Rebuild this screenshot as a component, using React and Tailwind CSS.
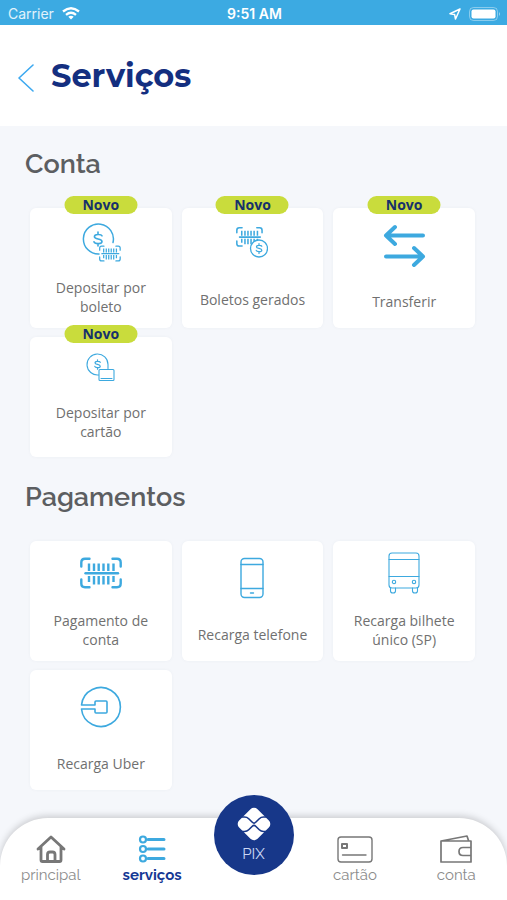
import React from "react";

function Svg({ className, viewBox, children, sw = 1.5 }) {
  return (
    <svg
      className={className}
      viewBox={viewBox}
      fill="none"
      stroke="currentColor"
      strokeWidth={sw}
      strokeLinecap="round"
      strokeLinejoin="round"
      aria-hidden="true"
    >
      {children}
    </svg>
  );
}

const dollar = "M4 -3.2C3.2 -5 -3.6 -5.2 -3.6 -2.3C-3.6 .6 4 -.7 4 2.4C4 5.4 -3.4 5.2 -4 2.8M0 -7V-4.6M0 4.8V7";

function Barcode() {
  return (
    <>
      <path d="M1.300 9V5Q1.300 1.300 5 1.300H9.500M32.500 1.300H37Q40.700 1.300 40.700 5V9M40.700 22V26Q40.700 29.700 37 29.700H32.500M9.500 29.700H5Q1.300 29.700 1.300 26V22" />
      <path d="M5.500 15.800H38" />
      <path
        d="M9 6V13.500M14 6V13.500M18.700 6V13.500M23.500 6V13.500M28.300 6V13.500M33.500 6V13.500M9 18.500V24.500M14 18.500V27M18.700 18.500V27M23.500 18.500V27M28.300 18.500V27M33.500 18.500V24.500"
        strokeLinecap="butt"
      />
    </>
  );
}

function SlipDepositIcon() {
  return (
    <Svg className="mt-[15px] h-10 w-10" viewBox="0 0 40 40">
      <path d="M32 19.500A15 15 0 1 0 18 31" />
      <path d={dollar} transform="translate(17 16)" strokeWidth="1.600" />
      <g transform="translate(18 22.500) scale(.52)" strokeWidth="2.400">
        <Barcode />
      </g>
    </Svg>
  );
}

function SlipsIcon() {
  return (
    <Svg className="mt-[19px] h-8 w-8" viewBox="0 0 32 32">
      <g transform="scale(.64)" strokeWidth="2.400">
        <Barcode />
      </g>
      <circle cx="23" cy="21.500" r="8.500" fill="white" strokeWidth="1.300" />
      <path d={dollar} transform="translate(23 21.500) scale(.7)" strokeWidth="1.800" />
    </Svg>
  );
}

function TransferIcon() {
  return (
    <Svg className="mt-4 h-[43px] w-[43px]" viewBox="0 0 43 43" sw={4}>
      <path d="M40 11.500H3M12 3L3 11.500L12 20M3 32.500H40M31 24L40 32.500L31 41" />
    </Svg>
  );
}

function CardDepositIcon() {
  return (
    <Svg className="mt-4 h-[29px] w-[29px]" viewBox="0 0 29 29" sw={1.1}>
      <path d="M22 15.500V11.500A10.500 10.500 0 1 0 12.500 22" />
      <path d={dollar} transform="translate(11.500 11.500) scale(.68)" strokeWidth="1.800" />
      <rect x="13" y="16.500" width="15" height="11" rx="1" fill="white" />
      <path d="M15 25.500H26" strokeWidth="1" />
    </Svg>
  );
}

function BillIcon() {
  return (
    <Svg className="mt-4 h-8 w-[42px]" viewBox="0 0 42 31" sw={2.4}>
      <Barcode />
    </Svg>
  );
}

function PhoneIcon() {
  return (
    <Svg className="mt-4 h-[42px] w-6" viewBox="0 0 24 42" sw={1.4}>
      <rect x="1" y="1.500" width="22" height="39" rx="3.500" />
      <path d="M1 7.500H23M1 31.500H23M10.500 36H13.500" />
    </Svg>
  );
}

function BusIcon() {
  return (
    <Svg className="mt-[11px] h-[42px] w-8" viewBox="0 0 32 42" sw={1.1}>
      <rect x="1" y="1" width="30" height="35" rx="3" />
      <path d="M1 7.500H31M1 24.500H31M2.500 36V39Q2.500 41 5 41Q7.500 41 7.500 39V36M24.500 36V39Q24.500 41 27 41Q29.500 41 29.500 39V36" />
      <circle cx="6" cy="30" r="1.700" />
      <circle cx="26" cy="30" r="1.700" />
    </Svg>
  );
}

function UberIcon() {
  return (
    <Svg className="mt-4 h-[42px] w-[42px]" viewBox="0 0 42 42" sw={1.6}>
      <path d="M1.500 19A19.500 19.500 0 1 1 1.500 23H15V26Q15 27 16 27H26Q27 27 27 26V16Q27 15 26 15H16Q15 15 15 16V19Z" />
    </Svg>
  );
}

function ServiceCard({ icon, iconArea, label, badge }) {
  return (
    <button
      type="button"
      className="relative flex h-[120px] flex-col items-center rounded-md bg-white shadow-[0_0_3px_rgba(90,100,120,0.06)]"
    >
      {badge && (
        <span className="absolute -top-3 left-1/2 h-[18px] w-[73px] -translate-x-1/2 rounded-full bg-[#c9dc3c] text-center text-[14px] leading-[18px] font-bold text-[#16316b]">
          Novo
        </span>
      )}
      <span className={`flex shrink-0 flex-col items-center text-[#3da9df] ${iconArea}`}>{icon}</span>
      <span className="px-3 text-[14px] leading-[19px] whitespace-pre-line text-[#707070]">{label}</span>
    </button>
  );
}

function Section({ title, items }) {
  return (
    <section>
      <h2 className="pl-[25px] font-['Raleway','Lato',sans-serif] text-[27px] leading-8 font-semibold text-[#5c5e61]">
        {title}
      </h2>
      <div className="mt-7 mr-8 ml-[30px] grid grid-cols-3 gap-x-[10px] gap-y-[9px]">
        {items.map((item) => (
          <ServiceCard key={item.label} {...item} />
        ))}
      </div>
    </section>
  );
}

const account = [
  { icon: <SlipDepositIcon />, iconArea: "h-[70px]", label: "Depositar por\nboleto", badge: true },
  { icon: <SlipsIcon />, iconArea: "h-[82px]", label: "Boletos gerados", badge: true },
  { icon: <TransferIcon />, iconArea: "h-[84px]", label: "Transferir", badge: true },
  { icon: <CardDepositIcon />, iconArea: "h-[66px]", label: "Depositar por\ncartão", badge: true },
];

const payments = [
  { icon: <BillIcon />, iconArea: "h-[70px]", label: "Pagamento de\nconta" },
  { icon: <PhoneIcon />, iconArea: "h-[84px]", label: "Recarga telefone" },
  { icon: <BusIcon />, iconArea: "h-[70px]", label: "Recarga bilhete\núnico (SP)" },
  { icon: <UberIcon />, iconArea: "h-[84px]", label: "Recarga Uber" },
];

function StatusBar() {
  return (
    <div className="grid h-[25px] grid-cols-3 items-center bg-[#3caae2] pr-[6px] pl-2 font-['Inter',sans-serif] text-[14px] leading-5 text-white">
      <div className="flex items-center gap-2 pt-[2px] text-white/85">
        Carrier
        <svg className="h-[13px] w-[18px]" viewBox="0 0 18 13" fill="none" stroke="white" strokeWidth="2.300" aria-hidden="true">
          <path d="M1 4.500Q9 -2 17 4.500M4 7.800Q9 3.700 14 7.800" />
          <path d="M9 12.500L6.300 9.800Q9 7.800 11.700 9.800Z" fill="white" stroke="none" />
        </svg>
      </div>
      <div className="pt-[2px] text-center font-semibold">9:51 AM</div>
      <div className="flex items-center justify-end gap-2 pt-[2px]">
        <svg className="h-3 w-3" viewBox="0 0 12 12" fill="none" stroke="white" strokeWidth="1.500" strokeLinejoin="round" aria-hidden="true">
          <path d="M11 1L1 5.800L5.600 6.400L6.500 11Z" />
        </svg>
        <svg className="h-[14px] w-8" viewBox="0 0 32 14" aria-hidden="true">
          <rect x=".5" y=".5" width="28" height="13" rx="4" fill="none" stroke="white" strokeOpacity=".4" />
          <rect x="2.500" y="2.500" width="24" height="9" rx="2" fill="white" />
          <path d="M30 5Q32 7 30 9Z" fill="white" fillOpacity=".5" />
        </svg>
      </div>
    </div>
  );
}

function NavItem({ label, children, active }) {
  return (
    <button
      type="button"
      aria-current={active ? "page" : undefined}
      className="flex flex-1 flex-col items-center pt-[15px] text-[#777]"
    >
      <span className="flex h-8 items-center">{children}</span>
      <span
        className={`text-[15px] leading-5 ${active ? "font-bold text-[#163894]" : "text-[#8c8c8c]"}`}
      >
        {label}
      </span>
    </button>
  );
}

function BottomNav() {
  return (
    <nav className="mt-auto flex h-[82px] rounded-t-[48px] bg-white font-['Raleway','Lato',sans-serif] shadow-[0_-2px_7px_rgba(0,0,0,0.18)]">
      <NavItem label="principal">
        <Svg className="h-7 w-[30px]" viewBox="0 0 30 28" sw={2.8}>
          <path d="M2 14L15 2L28 14M5 12V25Q5 26.500 6.500 26.500H23.500Q25 26.500 25 25V12M11.500 26V19.500Q11.500 17 14 17H16.500Q19 17 19 19.500V26" />
        </Svg>
      </NavItem>
      <NavItem label="serviços" active>
        <Svg className="h-7 w-7 text-[#3da9df]" viewBox="0 0 28 28" sw={2.2}>
          <circle cx="5" cy="4.500" r="3" />
          <circle cx="5" cy="14" r="3" />
          <circle cx="5" cy="23.500" r="3" />
          <path d="M10 4.500H26M10 14H26M10 23.500H26" strokeWidth="3" />
        </Svg>
      </NavItem>
      <div className="flex flex-1 justify-center">
        <button
          type="button"
          className="-mt-[23px] flex h-20 w-20 shrink-0 flex-col items-center rounded-full bg-[#173789] pt-3 text-white"
        >
          <svg className="h-[34px] w-[34px]" viewBox="0 0 34 34" aria-hidden="true">
            <rect x="4" y="4" width="26" height="26" rx="5" transform="rotate(45 17 17)" fill="white" />
            <path
              d="M3 10H7.500Q10 10 11.700 11.700L15.300 15.300Q17 17 18.700 15.300L22.300 11.700Q24 10 26.500 10H31M3 24.500H7.500Q10 24.500 11.700 22.800L15.300 19.200Q17 17.500 18.700 19.200L22.300 22.800Q24 24.500 26.500 24.500H31"
              fill="none"
              stroke="#173789"
              strokeWidth="1.600"
            />
          </svg>
          <span className="text-[15px] leading-[26px] text-[#cbd7f4]">PIX</span>
        </button>
      </div>
      <NavItem label="cartão">
        <Svg className="h-[27px] w-9" viewBox="0 0 36 27" sw={1.4}>
          <rect x="1" y="1" width="34" height="25" rx="3" />
          <rect x="5" y="8" width="5" height="4" strokeWidth="2" />
          <path d="M5.500 19H29" />
        </Svg>
      </NavItem>
      <NavItem label="conta">
        <Svg className="h-7 w-8" viewBox="0 0 32 28" sw={1.7}>
          <path d="M31 12.500V6H1V27H31V20.500M1 6L27 1L28.500 5.500M31 12.500H23Q19 12.500 19 16.500Q19 20.500 23 20.500H31Z" />
        </Svg>
      </NavItem>
    </nav>
  );
}

export default function App() {
  return (
    <div className="flex min-h-screen flex-col bg-[#f5f7fb] font-['Open_Sans','Noto_Sans',sans-serif]">
      <StatusBar />
      <header className="flex h-[101px] items-center bg-white pl-[18px]">
        <button type="button" aria-label="Voltar" className="mt-1 text-[#3da9f0]">
          <Svg className="h-7 w-4" viewBox="0 0 16 28" sw={1.6}>
            <path d="M15 1L1 14L15 27" />
          </Svg>
        </button>
        <h1 className="ml-[17px] font-['Montserrat','Lato',sans-serif] text-[32px] leading-10 font-bold text-[#142f80]">
          Serviços
        </h1>
      </header>
      <main className="flex flex-col gap-6 pt-[22px] pb-7">
        <Section title="Conta" items={account} />
        <Section title="Pagamentos" items={payments} />
      </main>
      <BottomNav />
    </div>
  );
}
